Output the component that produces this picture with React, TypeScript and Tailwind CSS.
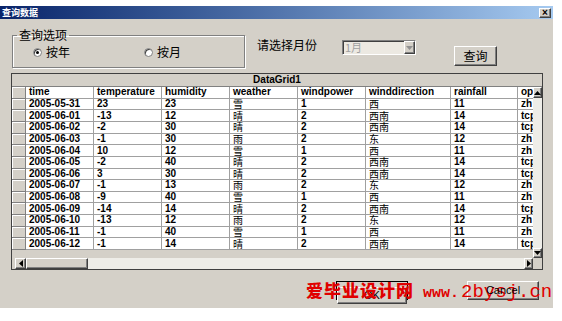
import React from 'react';

type Row = [string, string, string, string, string, string, string, string];

const rows: Row[] = [
  ['2005-05-31', '23', '23', '雪', '1', '西', '11', 'zh'],
  ['2005-06-01', '-13', '12', '晴', '2', '西南', '14', 'tcp'],
  ['2005-06-02', '-2', '30', '晴', '2', '西南', '14', 'tcp'],
  ['2005-06-03', '-1', '30', '雨', '2', '东', '12', 'zh'],
  ['2005-06-04', '10', '12', '雪', '1', '西', '11', 'zh'],
  ['2005-06-05', '-2', '40', '晴', '2', '西南', '14', 'tcp'],
  ['2005-06-06', '3', '30', '晴', '2', '西南', '14', 'tcp'],
  ['2005-06-07', '-1', '13', '雨', '2', '东', '12', 'zh'],
  ['2005-06-08', '-9', '40', '雪', '1', '西', '11', 'zh'],
  ['2005-06-09', '-14', '14', '晴', '2', '西南', '14', 'tcp'],
  ['2005-06-10', '-13', '12', '雨', '2', '东', '12', 'zh'],
  ['2005-06-11', '-1', '40', '雪', '1', '西', '11', 'zh'],
  ['2005-06-12', '-1', '14', '晴', '2', '西南', '14', 'tcp'],
];

const cols = [
  { name: 'time', w: 'w-[68px]' },
  { name: 'temperature', w: 'w-[68px]' },
  { name: 'humidity', w: 'w-[68px]' },
  { name: 'weather', w: 'w-[68px]' },
  { name: 'windpower', w: 'w-[68px]' },
  { name: 'winddirection', w: 'w-[85px]' },
  { name: 'rainfall', w: 'w-[67px]' },
  { name: 'op', w: 'w-[15px]' },
];

const raised =
  'bg-[#d4d0c8] border border-t-white border-l-white border-b-[#404040] border-r-[#404040] shadow-[inset_-1px_-1px_0_#808080]';
const sunken =
  'border border-t-[#808080] border-l-[#808080] border-b-white border-r-white shadow-[inset_1px_1px_0_#404040]';

const Arrow = ({ dir, color = '#000' }: { dir: 'up' | 'down' | 'left' | 'right'; color?: string }) => {
  const pts = {
    up: '0,4 3.5,0 7,4',
    down: '0,0 3.5,4 7,0',
    left: '4,0 0,3.5 4,7',
    right: '0,0 4,3.5 0,7',
  }[dir];
  const vertical = dir === 'up' || dir === 'down';
  return (
    <svg width={vertical ? 7 : 4} height={vertical ? 4 : 7} viewBox={vertical ? '0 0 7 4' : '0 0 4 7'}>
      <polygon points={pts} fill={color} />
    </svg>
  );
};

const Radio = ({ checked, label }: { checked?: boolean; label: string }) => (
  <div className="flex items-center gap-[4px]">
    <div className="w-[9px] h-[9px] rounded-full bg-white border border-[#808080] shadow-[inset_1px_1px_0_#404040] flex items-center justify-center">
      {checked && <div className="w-[3px] h-[3px] rounded-full bg-black" />}
    </div>
    <span className="text-[12px] leading-[14px]">{label}</span>
  </div>
);

const Cell = ({ w, text, last }: { w: string; text: string; last?: boolean }) => {
  const cjk = /[\u4e00-\u9fff]/.test(text);
  return (
    <div
      className={`${w} shrink-0 h-full border-b border-[#a0a0a0] ${last ? 'overflow-hidden' : 'border-r'} pl-[3px] whitespace-nowrap flex items-center bg-white ${
        cjk ? "font-['Noto_Sans_CJK_SC',sans-serif] text-[10px] leading-[10px]" : 'text-[10px] font-bold leading-[10px]'
      }`}
    >
      {text}
    </div>
  );
};

const RowHead = () => (
  <div className="w-[14px] shrink-0 h-full bg-[#d4d0c8] border-r border-b border-[#808080] shadow-[inset_1px_1px_0_#fff]" />
);

export default function App() {
  return (
    <div className="relative w-[562px] h-[321px] bg-white overflow-hidden font-['Noto_Sans_CJK_SC',sans-serif] text-black">
      <div className="mt-[6px] w-[553px] h-[302px] bg-[#d4d0c8] flex flex-col">
        {/* title bar */}
        <div className="h-[13px] bg-linear-to-r from-[#0a246a] to-[#a6caf0] flex items-center justify-between pl-[2px] pr-[2px]">
          <span className="text-white text-[9px] font-bold leading-none">查询数据</span>
          <div className={`${raised} w-[12px] h-[10px] flex items-center justify-center text-[10px] font-bold leading-none font-['Liberation_Sans',sans-serif]`}>
            ×
          </div>
        </div>

        {/* query options */}
        <div className="h-[54px] flex items-start shrink-0">
          <fieldset className="ml-[12px] mt-[9px] w-[233px] h-[40px] border border-[#808080] shadow-[inset_1px_1px_0_#fff,1px_1px_0_#fff]">
            <legend className="ml-[4px] px-[2px] text-[12px] leading-[14px]">查询选项</legend>
            <div className="h-[20px] flex items-center pl-[20px]">
              <Radio checked label="按年" />
              <div className="ml-[74px]">
                <Radio label="按月" />
              </div>
            </div>
          </fieldset>
          <span className="ml-[12px] mt-[19px] text-[12px] leading-[14px]">请选择月份</span>
          <div className={`ml-[25px] mt-[21px] w-[74px] h-[15px] bg-[#ece9e2] ${sunken} flex items-center`}>
            <span className="flex-1 pl-[2px] text-[11px] leading-none text-[#a0a0a0]">1月</span>
            <div className={`${raised} w-[11px] h-full flex items-center justify-center`}>
              <Arrow dir="down" color="#909090" />
            </div>
          </div>
          <button className={`ml-[38px] mt-[27px] w-[43px] h-[20px] ${raised} text-[12px] leading-none flex items-center justify-center`}>
            查询
          </button>
        </div>

        {/* data grid */}
        <div className="ml-[11px] w-[532px] h-[197px] shrink-0 border border-[#404040] bg-[#d4d0c8] flex flex-col font-['Liberation_Sans','Noto_Sans_CJK_SC',sans-serif]">
          <div className="h-[13px] shrink-0 border-b border-[#808080] flex items-center justify-center text-[10px] font-bold leading-none">
            DataGrid1
          </div>
          <div className="h-[171px] shrink-0 flex">
            <div className="w-[521px] flex flex-col">
              <div className="h-[163px] grid grid-rows-[repeat(14,minmax(0,1fr))]">
                <div className="flex">
                  <RowHead />
                  {cols.map((c, i) => (
                    <Cell key={c.name} w={c.w} text={c.name} last={i === cols.length - 1} />
                  ))}
                </div>
                {rows.map((r) => (
                  <div key={r[0]} className="flex">
                    <RowHead />
                    {r.map((v, i) => (
                      <Cell key={i} w={cols[i].w} text={v} last={i === r.length - 1} />
                    ))}
                  </div>
                ))}
              </div>
            </div>
            <div className="w-[9px] flex flex-col">
              <div className={`${raised} h-[11px] flex items-center justify-center`}>
                <Arrow dir="up" />
              </div>
              <div className="flex-1 bg-[#eeede8]" />
              <div className={`${raised} h-[10px] flex items-center justify-center`}>
                <Arrow dir="down" />
              </div>
            </div>
          </div>
          <div className="h-[11px] shrink-0 flex pl-[3px]">
            <div className={`${raised} w-[11px] flex items-center justify-center`}>
              <Arrow dir="left" />
            </div>
            <div className={`${raised} w-[62px]`} />
            <div className="flex-1 bg-[#eeede8]" />
            <div className={`${raised} w-[9px] flex items-center justify-center`}>
              <Arrow dir="right" />
            </div>
            <div className="w-[9px] bg-[#d4d0c8]" />
          </div>
        </div>

        {/* dialog buttons */}
        <div className="flex mt-[11px] font-['Liberation_Sans',sans-serif]">
          <div className="ml-[336px] w-[72px] h-[19px] border border-black">
            <button className={`w-full h-full ${raised} text-[11px] leading-none`}>OK</button>
          </div>
          <button className={`ml-[59px] w-[72px] h-[19px] ${raised} text-[11px] leading-none`}>
            <span className="relative z-20">Cancel</span>
          </button>
        </div>
      </div>

      {/* watermark */}
      <div className="absolute left-[306px] top-[280px] z-10 flex items-baseline text-[#e00000] whitespace-nowrap">
        <span className="font-['Noto_Sans_CJK_SC',sans-serif] text-[17px] font-black leading-[20px] tracking-[1px]">爱毕业设计网</span>
        <span className="ml-[9px] font-['Liberation_Mono',monospace] text-[15px] font-bold leading-[20px]">www.</span>
        <span className="ml-[2px] font-['Liberation_Mono',monospace] text-[19px] leading-[20px]">2bysj.cn</span>
      </div>
    </div>
  );
}
